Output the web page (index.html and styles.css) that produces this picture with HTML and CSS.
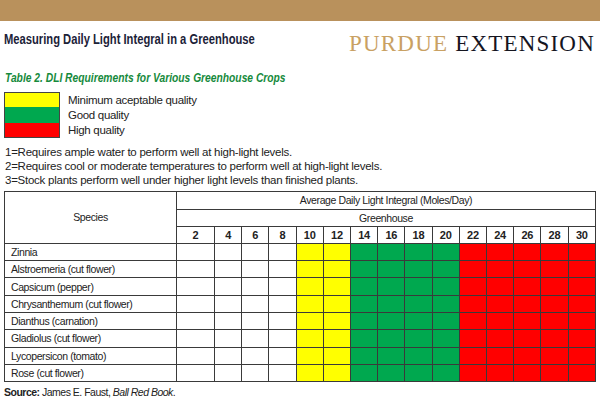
FILE: index.html
```html
<!DOCTYPE html>
<html>
<head>
<meta charset="utf-8">
<link rel="stylesheet" href="styles.css">
</head>
<body>
<div class="topbar"></div>
<div class="head">
  <h1 class="title"><span class="cond">Measuring Daily Light Integral in a Greenhouse</span></h1>
  <div class="logo"><span class="purdue">PURDUE</span> <span class="ext">EXTENSION</span></div>
</div>
<h2 class="caption"><span class="cond">Table 2. DLI Requirements for Various Greenhouse Crops</span></h2>
<div class="legend">
  <div class="lg-row"><span class="sw yellow"></span><span>Minimum aceptable quality</span></div>
  <div class="lg-row"><span class="sw green"></span><span>Good quality</span></div>
  <div class="lg-row"><span class="sw red"></span><span>High quality</span></div>
</div>
<div class="notes">
  <p>1=Requires ample water to perform well at high-light levels.</p>
  <p>2=Requires cool or moderate temperatures to perform well at high-light levels.</p>
  <p>3=Stock plants perform well under higher light levels than finished plants.</p>
</div>
<table class="dli">
  <colgroup>
    <col class="c-sp"><col class="c-2">
    <col><col><col><col><col><col><col><col><col><col><col><col><col><col>
  </colgroup>
  <thead>
    <tr><th rowspan="3" class="species">Species</th><th colspan="15" class="span">Average Daily Light Integral (Moles/Day)</th></tr>
    <tr><th colspan="15" class="span sub">Greenhouse</th></tr>
    <tr class="nums"><th>2</th><th>4</th><th>6</th><th>8</th><th>10</th><th>12</th><th>14</th><th>16</th><th>18</th><th>20</th><th>22</th><th>24</th><th>26</th><th>28</th><th>30</th></tr>
  </thead>
  <tbody>
    <tr><td class="name">Zinnia</td><td></td><td></td><td></td><td></td><td class="y"></td><td class="y"></td><td class="g"></td><td class="g"></td><td class="g"></td><td class="g"></td><td class="r"></td><td class="r"></td><td class="r"></td><td class="r"></td><td class="r"></td></tr>
    <tr><td class="name">Alstroemeria (cut flower)</td><td></td><td></td><td></td><td></td><td class="y"></td><td class="y"></td><td class="g"></td><td class="g"></td><td class="g"></td><td class="g"></td><td class="r"></td><td class="r"></td><td class="r"></td><td class="r"></td><td class="r"></td></tr>
    <tr><td class="name">Capsicum (pepper)</td><td></td><td></td><td></td><td></td><td class="y"></td><td class="y"></td><td class="g"></td><td class="g"></td><td class="g"></td><td class="g"></td><td class="r"></td><td class="r"></td><td class="r"></td><td class="r"></td><td class="r"></td></tr>
    <tr><td class="name">Chrysanthemum (cut flower)</td><td></td><td></td><td></td><td></td><td class="y"></td><td class="y"></td><td class="g"></td><td class="g"></td><td class="g"></td><td class="g"></td><td class="r"></td><td class="r"></td><td class="r"></td><td class="r"></td><td class="r"></td></tr>
    <tr><td class="name">Dianthus (carnation)</td><td></td><td></td><td></td><td></td><td class="y"></td><td class="y"></td><td class="g"></td><td class="g"></td><td class="g"></td><td class="g"></td><td class="r"></td><td class="r"></td><td class="r"></td><td class="r"></td><td class="r"></td></tr>
    <tr><td class="name">Gladiolus (cut flower)</td><td></td><td></td><td></td><td></td><td class="y"></td><td class="y"></td><td class="g"></td><td class="g"></td><td class="g"></td><td class="g"></td><td class="r"></td><td class="r"></td><td class="r"></td><td class="r"></td><td class="r"></td></tr>
    <tr><td class="name">Lycopersicon (tomato)</td><td></td><td></td><td></td><td></td><td class="y"></td><td class="y"></td><td class="g"></td><td class="g"></td><td class="g"></td><td class="g"></td><td class="r"></td><td class="r"></td><td class="r"></td><td class="r"></td><td class="r"></td></tr>
    <tr><td class="name">Rose (cut flower)</td><td></td><td></td><td></td><td></td><td class="y"></td><td class="y"></td><td class="g"></td><td class="g"></td><td class="g"></td><td class="g"></td><td class="r"></td><td class="r"></td><td class="r"></td><td class="r"></td><td class="r"></td></tr>
  </tbody>
</table>
<p class="source"><b>Source:</b> James E. Faust, <i>Ball Red Book</i>.</p>
</body>
</html>
```

FILE: styles.css
```css
* { box-sizing: border-box; }
html, body { margin: 0; padding: 0; background: #fff; }
body {
  width: 600px;
  height: 400px;
  overflow: hidden;
  font-family: "Liberation Sans", Arial, sans-serif;
  color: #222;
}
.topbar {
  height: 21px;
  background: #b9915c;
}
.head {
  display: flex;
  justify-content: space-between;
  align-items: flex-start;
  height: 49px;
  padding: 7px 5px 0 4px;
}
.cond {
  display: inline-block;
  white-space: nowrap;
  transform-origin: left center;
}
.title {
  margin: 3px 0 0;
  font-family: "Liberation Sans", Arial, sans-serif;
  font-weight: bold;
  font-size: 14px;
  line-height: 16px;
  color: #1b2238;
}
.title .cond { transform: scaleX(0.80); }
.logo {
  margin-top: 3px;
  font-family: "Liberation Serif", "DejaVu Serif", serif;
  font-size: 23px;
  letter-spacing: 1.2px;
  line-height: 26px;
  white-space: nowrap;
}
.purdue { color: #c9a163; }
.ext { color: #15151f; }
.caption {
  margin: 0 0 6px 5px;
  font-family: "Liberation Sans", Arial, sans-serif;
  font-weight: bold;
  font-style: italic;
  font-size: 13px;
  line-height: 16px;
  color: #168a3c;
}
.caption .cond { transform: scaleX(0.79); }
.legend {
  display: flex;
  flex-direction: column;
  padding-left: 4px;
}
.lg-row {
  display: flex;
  align-items: center;
  gap: 8px;
  height: 15.3px;
  font-size: 11.5px;
  letter-spacing: -0.3px;
  color: #222;
}
.sw {
  width: 56px;
  height: 15.3px;
  border-left: 1px solid #444;
  border-right: 1px solid #444;
}
.lg-row:first-child .sw { border-top: 1px solid #444; }
.lg-row:last-child .sw { border-bottom: 1px solid #444; }
.yellow { background: #ffff00; }
.green { background: #00a84f; }
.red { background: #ff0000; }
.notes {
  margin-top: 7px;
  padding-left: 5px;
}
.notes p {
  margin: 0;
  font-size: 11.5px;
  letter-spacing: -0.25px;
  line-height: 14.3px;
  color: #222;
}
.dli {
  margin: 3px 0 0 4px;
  width: 592px;
  border-collapse: collapse;
  table-layout: fixed;
  font-size: 10.5px;
  letter-spacing: -0.4px;
  border: 1px solid #888;
}
.c-sp { width: 172px; }
.c-2 { width: 38px; }
.dli th, .dli td {
  border: 1px solid #3a3a3a;
  padding: 0;
  height: 17.3px;
  text-align: center;
  font-weight: normal;
  color: #222;
}
.dli th.span { height: 18px; }
.dli th.sub { height: 17px; }
.dli .nums th {
  font-weight: bold;
  font-size: 11px;
  letter-spacing: -0.2px;
  height: 17px;
}
.dli td.name {
  text-align: left;
  padding-left: 6px;
  white-space: nowrap;
}
.dli .y { background: #ffff00; }
.dli .g { background: #00a84f; }
.dli .r { background: #ff0000; }
.source {
  margin: 4px 0 0 4px;
  font-size: 10.5px;
  letter-spacing: -0.5px;
  color: #222;
}
```
